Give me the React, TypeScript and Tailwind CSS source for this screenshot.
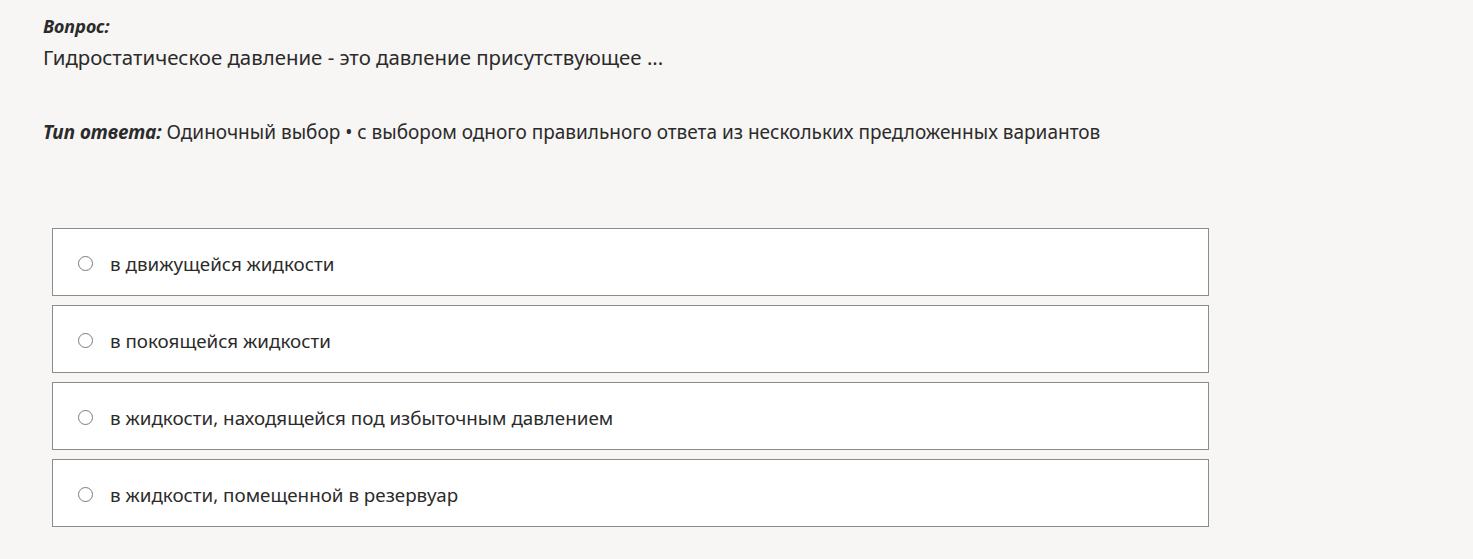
const options = [
  'в движущейся жидкости',
  'в покоящейся жидкости',
  'в жидкости, находящейся под избыточным давлением',
  'в жидкости, помещенной в резервуар',
]

export default function App() {
  return (
    <div
      className="min-h-[559px] bg-[#f7f6f4] text-[#2b2b2b]"
      style={{ fontFamily: '"Segoe UI", "Noto Sans", "Open Sans", sans-serif' }}
    >
      <div className="pl-[43px] pt-[12px]">
        <div className="text-[18px] leading-[28px] font-bold italic">Вопрос:</div>
        <div className="text-[20.4px] leading-[34px]">Гидростатическое давление - это давление присутствующее ...</div>

        <div className="mt-[43px] text-[19px] leading-[30px]">
          <span className="font-bold italic">Тип ответа:</span> Одиночный выбор • с выбором одного правильного ответа из нескольких предложенных вариантов
        </div>
      </div>

      <div className="mt-[81px] ml-[52px] w-[1157px] flex flex-col gap-[9px]">
        {options.map((o) => (
          <label key={o} className="h-[68px] bg-white border border-[#8c8c8c] flex items-center pl-[25px] pt-[3px] cursor-pointer">
            <span className="w-[15px] h-[15px] rounded-full border border-[#7a7a7a] bg-white shrink-0" />
            <span className="ml-[17px] text-[18.8px] leading-[28px]">{o}</span>
          </label>
        ))}
      </div>
    </div>
  )
}
